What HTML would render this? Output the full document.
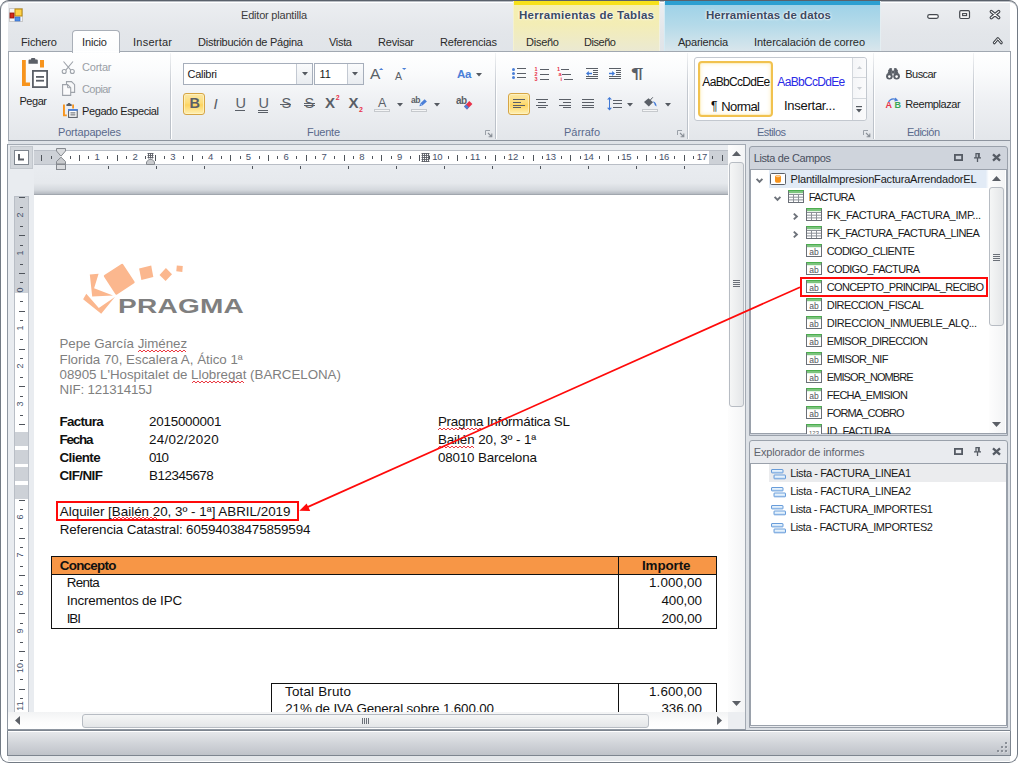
<!DOCTYPE html>
<html lang="es"><head><meta charset="utf-8"><title>Editor plantilla</title>
<style>
html,body{margin:0;padding:0;background:#fff;}
body{width:1018px;height:763px;overflow:hidden;position:relative;font-family:"Liberation Sans", "DejaVu Sans", sans-serif;font-size:11px;}
.a{position:absolute;box-sizing:border-box;}
.t{position:absolute;white-space:pre;}
svg{overflow:visible}
</style></head>
<body>
<div class="a" style="left:0px;top:0px;width:1018px;height:763px;background:#fff;border:1px solid #727a84;border-top:1px solid #5a616b;border-radius:9px;box-shadow:inset 0 1px 0 #b9bdc3;"></div>
<div class="a" style="left:8px;top:3px;width:1002px;height:758px;background:linear-gradient(#eceef1 0px,#e3e6ea 30px,#dfe3e8 60px,#dde1e6 100%);"></div>
<div class="a" style="left:513px;top:1px;width:147px;height:51px;background:linear-gradient(#f7e11a 0px,#f7e11a 3.5px,#f6efae 4px,#f3edb6 24px,#ebe9d2 50px);border-left:1px solid #f4f1d0;border-right:1px solid #f1f0e0;"></div>
<div class="a" style="left:664px;top:1px;width:217px;height:51px;background:linear-gradient(#2b9fd1 0px,#2b9fd1 3.5px,#9fd2e8 4px,#b4dae9 24px,#d9e6ec 50px);border-left:1px solid #d4ebf4;border-right:1px solid #e4eef2;"></div>
<svg class="a" style="left:9px;top:8px;" width="14" height="14" viewBox="0 0 14 14"><rect x="0.5" y="0.5" width="13" height="13" fill="#f4f4f4" stroke="#c9c9c9"/>
    <rect x="6" y="1" width="7" height="7" fill="#fdd24a" stroke="#b8860b"/>
    <rect x="1" y="5" width="4" height="5" fill="#d42a1c" stroke="#8e1209" stroke-width="0.8"/>
    <rect x="6" y="9" width="5" height="4" fill="#4f8fe8" stroke="#2a62c4" stroke-width="0.6"/></svg>
<span class="t" style="left:241px;top:8px;font-size:11px;line-height:14px;color:#3c3c3c;letter-spacing:-0.206px;">Editor plantilla</span>
<svg class="a" style="left:927px;top:14px;" width="13" height="6" viewBox="0 0 13 6"><rect x="0.7" y="0.7" width="10.6" height="3.6" rx="1.8" fill="#fff" stroke="#45494f" stroke-width="1.2"/></svg>
<svg class="a" style="left:959px;top:10px;" width="12" height="10" viewBox="0 0 12 10"><rect x="0.7" y="0.7" width="9.8" height="7.8" rx="1.2" fill="#f4f4f4" stroke="#45494f" stroke-width="1.2"/><rect x="3.6" y="3.6" width="4" height="2" fill="#fff" stroke="#45494f" stroke-width="1.1"/></svg>
<svg class="a" style="left:989px;top:10px;" width="12" height="10" viewBox="0 0 12 10"><path d="M2.3 1.6 L9.7 7.6 M9.7 1.6 L2.3 7.6" stroke="#45494f" stroke-width="3.4" stroke-linecap="round"/><path d="M2.3 1.6 L9.7 7.6 M9.7 1.6 L2.3 7.6" stroke="#fff" stroke-width="1.2" stroke-linecap="round"/></svg>
<svg class="a" style="left:993px;top:37px;" width="10" height="8" viewBox="0 0 10 8"><path d="M1.3 5.8 L4.8 1.6 L8.3 5.8" fill="none" stroke="#45494f" stroke-width="3" stroke-linecap="round" stroke-linejoin="round"/><path d="M1.3 5.8 L4.8 1.6 L8.3 5.8" fill="none" stroke="#fff" stroke-width="1" stroke-linecap="round" stroke-linejoin="round"/></svg>
<div class="a" style="left:7px;top:730px;width:1004px;height:26px;background:linear-gradient(#e7e9ec,#d2d5da 50%,#bfc3c9);border:1px solid #7d858f;box-shadow:inset 0 1px 0 #fff;"></div>
<svg class="a" style="left:997px;top:741px;" width="12" height="12" viewBox="0 0 12 12"><rect x="8" y="1" width="2" height="2" fill="#8a8f97"/><rect x="9" y="2" width="1.5" height="1.5" fill="#eceef0" opacity="0.8"/><rect x="8" y="1" width="2" height="2" fill="#8a8f97"/><rect x="4" y="5" width="2" height="2" fill="#8a8f97"/><rect x="5" y="6" width="1.5" height="1.5" fill="#eceef0" opacity="0.8"/><rect x="4" y="5" width="2" height="2" fill="#8a8f97"/><rect x="8" y="5" width="2" height="2" fill="#8a8f97"/><rect x="9" y="6" width="1.5" height="1.5" fill="#eceef0" opacity="0.8"/><rect x="8" y="5" width="2" height="2" fill="#8a8f97"/><rect x="0" y="9" width="2" height="2" fill="#8a8f97"/><rect x="1" y="10" width="1.5" height="1.5" fill="#eceef0" opacity="0.8"/><rect x="0" y="9" width="2" height="2" fill="#8a8f97"/><rect x="4" y="9" width="2" height="2" fill="#8a8f97"/><rect x="5" y="10" width="1.5" height="1.5" fill="#eceef0" opacity="0.8"/><rect x="4" y="9" width="2" height="2" fill="#8a8f97"/><rect x="8" y="9" width="2" height="2" fill="#8a8f97"/><rect x="9" y="10" width="1.5" height="1.5" fill="#eceef0" opacity="0.8"/><rect x="8" y="9" width="2" height="2" fill="#8a8f97"/></svg>
<div class="a" style="left:8px;top:756px;width:1002px;height:5px;background:#e4e7ea;"></div>
<div class="a" style="left:72px;top:30px;width:48px;height:23px;background:linear-gradient(#ffffff,#fbfcfd);border:1px solid #a9afb8;border-bottom:none;border-radius:4px 4px 0 0;z-index:3;"></div>
<span class="t" style="left:21px;top:35px;font-size:11px;line-height:14px;color:#2a2a2a;letter-spacing:-0.115px;z-index:4;">Fichero</span>
<span class="t" style="left:82px;top:35px;font-size:11px;line-height:14px;color:#2a2a2a;letter-spacing:-0.138px;z-index:4;">Inicio</span>
<span class="t" style="left:133px;top:35px;font-size:11px;line-height:14px;color:#2a2a2a;letter-spacing:0.243px;z-index:4;">Insertar</span>
<span class="t" style="left:198px;top:35px;font-size:11px;line-height:14px;color:#2a2a2a;letter-spacing:-0.242px;z-index:4;">Distribución de Página</span>
<span class="t" style="left:329px;top:35px;font-size:11px;line-height:14px;color:#2a2a2a;letter-spacing:-0.316px;z-index:4;">Vista</span>
<span class="t" style="left:378px;top:35px;font-size:11px;line-height:14px;color:#2a2a2a;letter-spacing:-0.216px;z-index:4;">Revisar</span>
<span class="t" style="left:440px;top:35px;font-size:11px;line-height:14px;color:#2a2a2a;letter-spacing:-0.170px;z-index:4;">Referencias</span>
<span class="t" style="left:526px;top:35px;font-size:11px;line-height:14px;color:#2a2a2a;letter-spacing:-0.250px;z-index:4;">Diseño</span>
<span class="t" style="left:584px;top:35px;font-size:11px;line-height:14px;color:#2a2a2a;letter-spacing:-0.450px;z-index:4;">Diseño</span>
<span class="t" style="left:678px;top:35px;font-size:11px;line-height:14px;color:#2a2a2a;letter-spacing:-0.220px;z-index:4;">Apariencia</span>
<span class="t" style="left:754px;top:35px;font-size:11px;line-height:14px;color:#2a2a2a;letter-spacing:-0.041px;z-index:4;">Intercalación de correo</span>
<span class="t" style="left:519px;top:8px;font-size:11.5px;line-height:14px;color:#3c4a63;letter-spacing:0.290px;font-weight:bold;text-shadow:0 0 3px #fff,0 0 2px #fff;">Herramientas de Tablas</span>
<span class="t" style="left:706px;top:8px;font-size:11.5px;line-height:14px;color:#3c4a63;letter-spacing:0.050px;font-weight:bold;text-shadow:0 0 3px #fff,0 0 2px #fff;">Herramientas de datos</span>
<div class="a" style="left:8px;top:51px;width:1003px;height:90px;background:linear-gradient(#ffffff 0px,#fafbfc 20px,#eef0f3 50px,#e3e6ea 88px);border:1px solid #a1a8b1;border-bottom:1px solid #8d949e;border-radius:0 0 0 0;"></div>
<div class="a" style="left:73px;top:51px;width:46px;height:1px;background:#fff;z-index:3;"></div>
<div class="a" style="left:170px;top:53px;width:1px;height:86px;background:linear-gradient(rgba(190,196,204,0.2),#c3c8cf 40%,#b9bfc7);"></div>
<div class="a" style="left:171px;top:53px;width:1px;height:86px;background:linear-gradient(rgba(255,255,255,0),#fff 40%);"></div>
<div class="a" style="left:495px;top:53px;width:1px;height:86px;background:linear-gradient(rgba(190,196,204,0.2),#c3c8cf 40%,#b9bfc7);"></div>
<div class="a" style="left:496px;top:53px;width:1px;height:86px;background:linear-gradient(rgba(255,255,255,0),#fff 40%);"></div>
<div class="a" style="left:687px;top:53px;width:1px;height:86px;background:linear-gradient(rgba(190,196,204,0.2),#c3c8cf 40%,#b9bfc7);"></div>
<div class="a" style="left:688px;top:53px;width:1px;height:86px;background:linear-gradient(rgba(255,255,255,0),#fff 40%);"></div>
<div class="a" style="left:873px;top:53px;width:1px;height:86px;background:linear-gradient(rgba(190,196,204,0.2),#c3c8cf 40%,#b9bfc7);"></div>
<div class="a" style="left:874px;top:53px;width:1px;height:86px;background:linear-gradient(rgba(255,255,255,0),#fff 40%);"></div>
<div class="a" style="left:973px;top:53px;width:1px;height:86px;background:linear-gradient(rgba(190,196,204,0.2),#c3c8cf 40%,#b9bfc7);"></div>
<div class="a" style="left:974px;top:53px;width:1px;height:86px;background:linear-gradient(rgba(255,255,255,0),#fff 40%);"></div>
<span class="t" style="left:58px;top:125px;font-size:11px;line-height:14px;color:#5a6a8c;letter-spacing:-0.166px;">Portapapeles</span>
<span class="t" style="left:307px;top:125px;font-size:11px;line-height:14px;color:#5a6a8c;letter-spacing:-0.250px;">Fuente</span>
<span class="t" style="left:564px;top:125px;font-size:11px;line-height:14px;color:#5a6a8c;letter-spacing:-0.013px;">Párrafo</span>
<span class="t" style="left:757px;top:125px;font-size:11px;line-height:14px;color:#5a6a8c;letter-spacing:-0.568px;">Estilos</span>
<span class="t" style="left:907px;top:125px;font-size:11px;line-height:14px;color:#5a6a8c;letter-spacing:-0.513px;">Edición</span>
<svg class="a" style="left:485px;top:130px;" width="8" height="8" viewBox="0 0 8 8"><path d="M0.5 5 V0.5 H5" fill="none" stroke="#9aa0a8" stroke-width="1"/><path d="M3 3 L6.5 6.5 M6.8 3.6 V6.8 H3.6" fill="none" stroke="#8a9098" stroke-width="1.1"/></svg>
<svg class="a" style="left:677px;top:130px;" width="8" height="8" viewBox="0 0 8 8"><path d="M0.5 5 V0.5 H5" fill="none" stroke="#9aa0a8" stroke-width="1"/><path d="M3 3 L6.5 6.5 M6.8 3.6 V6.8 H3.6" fill="none" stroke="#8a9098" stroke-width="1.1"/></svg>
<svg class="a" style="left:863px;top:130px;" width="8" height="8" viewBox="0 0 8 8"><path d="M0.5 5 V0.5 H5" fill="none" stroke="#9aa0a8" stroke-width="1"/><path d="M3 3 L6.5 6.5 M6.8 3.6 V6.8 H3.6" fill="none" stroke="#8a9098" stroke-width="1.1"/></svg>
<svg class="a" style="left:22px;top:58px;" width="27" height="31" viewBox="0 0 27 31"><path d="M0 2 H3.8 V24.5 H8 V28 H0 Z" fill="#f7941d"/>
    <rect x="18" y="2" width="4" height="7.5" fill="#f7941d"/>
    <path d="M6.5 5.8 V2.6 Q6.5 1.6 7.5 1.6 H9 V0.9 Q9 0 10 0 H12.3 Q13.3 0 13.3 0.9 V1.6 H14.8 Q15.8 1.6 15.8 2.6 V5.8 Z" fill="#5a5f67"/>
    <rect x="10.9" y="12.9" width="14.2" height="16.2" fill="#fff" stroke="#5a5f67" stroke-width="1.8"/>
    <rect x="14" y="18" width="8" height="1.8" fill="#5a5f67"/><rect x="14" y="21.8" width="8" height="1.8" fill="#5a5f67"/></svg>
<span class="t" style="left:19.5px;top:94px;font-size:11px;line-height:15px;color:#1e1e1e;letter-spacing:-0.465px;">Pegar</span>
<svg class="a" style="left:61px;top:61px;" width="15" height="13" viewBox="0 0 15 13"><path d="M2.5 0.5 L9.8 9.2 M12 0.5 L4.8 9.2" stroke="#9ea3aa" stroke-width="1.1" fill="none"/>
    <circle cx="3.2" cy="10.5" r="2" fill="none" stroke="#9ea3aa" stroke-width="1.1"/><circle cx="11.3" cy="10.5" r="2" fill="none" stroke="#9ea3aa" stroke-width="1.1"/></svg>
<span class="t" style="left:82px;top:59.8px;font-size:11px;line-height:14px;color:#9a9fa6;letter-spacing:-0.212px;">Cortar</span>
<svg class="a" style="left:62px;top:81px;" width="14" height="15" viewBox="0 0 14 15"><path d="M4.5 0.6 H9.5 L12.6 3.7 V11.4 H4.5 Z" fill="#f7f8f9" stroke="#9ea3aa" stroke-width="1.1"/>
    <path d="M0.6 3.6 H5.6 L8.7 6.7 V14.4 H0.6 Z" fill="#fbfbfc" stroke="#9ea3aa" stroke-width="1.1"/><path d="M5.6 3.6 V6.7 H8.7" fill="none" stroke="#9ea3aa" stroke-width="1"/></svg>
<span class="t" style="left:82px;top:82px;font-size:11px;line-height:14px;color:#9a9fa6;letter-spacing:-0.581px;">Copiar</span>
<svg class="a" style="left:63px;top:103px;" width="15" height="15" viewBox="0 0 15 15"><path d="M0 1.5 H1.9 V11.5 H3.8 V13.2 H0 Z" fill="#f7941d"/><rect x="9.2" y="1.5" width="1.8" height="4" fill="#f7941d"/>
    <path d="M3.4 3 V1.6 Q3.4 0.9 4.1 0.9 H4.7 Q4.7 0 5.7 0 H6.4 Q7.4 0 7.4 0.9 H8 Q8.7 0.9 8.7 1.6 V3 Z" fill="#5a5f67"/>
    <rect x="5.6" y="7" width="8.6" height="7.4" fill="#fff" stroke="#5a5f67" stroke-width="1.1"/><rect x="5" y="6" width="9.8" height="1.8" fill="#4a7fd8"/>
    <rect x="7.4" y="9.4" width="5" height="1" fill="#5a5f67"/><rect x="7.4" y="11.4" width="5" height="1" fill="#5a5f67"/></svg>
<span class="t" style="left:82px;top:104px;font-size:11px;line-height:14px;color:#1e1e1e;letter-spacing:-0.397px;">Pegado Especial</span>
<div class="a" style="left:183px;top:63px;width:130px;height:22px;background:#fff;border:1px solid #a6aebb;"></div>
<div class="a" style="left:296px;top:64px;width:16px;height:20px;background:linear-gradient(#fafbfc,#e9ecf0);border-left:1px solid #c3c9d2;"></div>
<span class="t" style="left:187.5px;top:67px;font-size:11px;line-height:14px;color:#1a1a1a;letter-spacing:-0.281px;">Calibri</span>
<div class="a" style="left:314px;top:63px;width:50px;height:22px;background:#fff;border:1px solid #a6aebb;"></div>
<div class="a" style="left:347px;top:64px;width:16px;height:20px;background:linear-gradient(#fafbfc,#e9ecf0);border-left:1px solid #c3c9d2;"></div>
<span class="t" style="left:319.6px;top:67px;font-size:11px;line-height:14px;color:#1a1a1a;letter-spacing:-0.022px;">11</span>
<svg class="a" style="left:301.5px;top:72.4px;" width="6" height="3.5" viewBox="0 0 6 3.5"><path d="M0 0 H6 L3 3.5 Z" fill="#555a61"/></svg>
<svg class="a" style="left:352.3px;top:72.4px;" width="6" height="3.5" viewBox="0 0 6 3.5"><path d="M0 0 H6 L3 3.5 Z" fill="#555a61"/></svg>
<span class="t" style="left:370px;top:66px;font-size:15.5px;line-height:16px;color:#5a5f67;letter-spacing:-0.344px;">A</span>
<svg class="a" style="left:379px;top:67.6px;" width="4.4" height="2" viewBox="0 0 4.4 2"><path d="M0 2 L2.2 0 L4.4 2 Z" fill="#4a7fd8"/></svg>
<span class="t" style="left:395px;top:69.6px;font-size:10.5px;line-height:12px;color:#5a5f67;letter-spacing:-0.016px;">A</span>
<svg class="a" style="left:401.6px;top:67.6px;" width="4.4" height="2" viewBox="0 0 4.4 2"><path d="M0 0 H4.4 L2.2 2 Z" fill="#4a7fd8"/></svg>
<span class="t" style="left:457px;top:67px;font-size:11.5px;line-height:14px;color:#4a7fd8;letter-spacing:-0.403px;font-weight:bold;">Aa</span>
<svg class="a" style="left:475.8px;top:73px;" width="6" height="3.5" viewBox="0 0 6 3.5"><path d="M0 0 H6 L3 3.5 Z" fill="#555a61"/></svg>
<div class="a" style="left:183px;top:93px;width:22px;height:22px;background:linear-gradient(#fbe7a6 0%,#fddc78 45%,#fdd460 55%,#fff0b4 100%);border:1px solid #d6a545;border-radius:3px;box-shadow:inset 0 0 0 1px rgba(255,245,200,0.7);"></div>
<span class="t" style="left:189.6px;top:95px;font-size:14.5px;line-height:17px;color:#5a5f67;letter-spacing:-1.484px;font-weight:bold;">B</span>
<span class="t" style="left:213.6px;top:94.6px;font-size:15px;line-height:17px;color:#5a5f67;font-style:italic;font-family:"Liberation Serif",serif;font-weight:bold;">I</span>
<span class="t" style="left:235.4px;top:94.6px;font-size:14.5px;line-height:17px;color:#5a5f67;letter-spacing:-1.284px;">U</span>
<div class="a" style="left:235px;top:110px;width:10px;height:1px;background:#5a5f67;"></div>
<span class="t" style="left:258.4px;top:94.6px;font-size:14.5px;line-height:17px;color:#5a5f67;letter-spacing:-1.284px;">U</span>
<div class="a" style="left:258px;top:110px;width:10px;height:1px;background:#5a5f67;"></div>
<div class="a" style="left:258px;top:112px;width:10px;height:1px;background:#5a5f67;"></div>
<span class="t" style="left:281.4px;top:94.6px;font-size:14.5px;line-height:17px;color:#5a5f67;letter-spacing:-1.272px;">S</span>
<div class="a" style="left:280px;top:104px;width:11px;height:1px;background:#5a5f67;"></div>
<span class="t" style="left:304.6px;top:94.6px;font-size:14.5px;line-height:17px;color:#5a5f67;letter-spacing:-1.272px;">S</span>
<div class="a" style="left:303.5px;top:103px;width:11px;height:1px;background:#5a5f67;"></div>
<div class="a" style="left:303.5px;top:105px;width:11px;height:1px;background:#5a5f67;"></div>
<span class="t" style="left:325px;top:94px;font-size:15px;line-height:18px;color:#5a5f67;letter-spacing:-0.416px;font-weight:bold;">X</span>
<span class="t" style="left:335.8px;top:94.2px;font-size:7px;line-height:8px;color:#e8324a;font-weight:bold;">2</span>
<span class="t" style="left:348.4px;top:94px;font-size:15px;line-height:18px;color:#5a5f67;letter-spacing:-0.616px;font-weight:bold;">X</span>
<span class="t" style="left:359px;top:105.5px;font-size:7px;line-height:8px;color:#e8324a;font-weight:bold;">2</span>
<span class="t" style="left:378px;top:96px;font-size:12.5px;line-height:14px;color:#5a5f67;letter-spacing:0.456px;">A</span>
<div class="a" style="left:374px;top:108.5px;width:16px;height:3px;background:#f4f5f6;border:1px solid #c6c9cd;"></div>
<svg class="a" style="left:397px;top:103px;" width="6" height="3.5" viewBox="0 0 6 3.5"><path d="M0 0 H6 L3 3.5 Z" fill="#555a61"/></svg>
<span class="t" style="left:411px;top:94.5px;font-size:8.5px;line-height:10px;color:#5a5f67;letter-spacing:-0.422px;font-weight:bold;">ab</span>
<svg class="a" style="left:418.5px;top:99px;" width="8.5" height="7.5" viewBox="0 0 8.5 7.5"><path d="M0.4 7.2 L1.2 4.6 L5.6 0.3 L7.9 2.4 L3.4 6.6 Z" fill="#4a7fd8"/><path d="M1.2 4.6 L3.4 6.6" stroke="#dfe9fa" stroke-width="0.7"/></svg>
<div class="a" style="left:411.3px;top:108.5px;width:16px;height:3px;background:#f4f5f6;border:1px solid #c6c9cd;"></div>
<svg class="a" style="left:433.8px;top:103px;" width="6" height="3.5" viewBox="0 0 6 3.5"><path d="M0 0 H6 L3 3.5 Z" fill="#555a61"/></svg>
<span class="t" style="left:456px;top:94.5px;font-size:10px;line-height:11px;color:#5a5f67;letter-spacing:-0.672px;font-weight:bold;">ab</span>
<svg class="a" style="left:464px;top:100.5px;" width="8.5" height="8.5" viewBox="0 0 8.5 8.5"><path d="M0 5.5 L5.3 0 L8.4 2.9 L3 8.4 Z" fill="#e8324a"/><path d="M0 5.5 L2 3.4 L5 6.3 L3 8.4 Z" fill="#4a7fd8"/></svg>
<svg class="a" style="left:512px;top:67.5px;" width="3" height="3" viewBox="0 0 3 3"><circle cx="1.5" cy="1.5" r="1.5" fill="#4a7fd8"/></svg>
<div class="a" style="left:517px;top:68px;width:9px;height:1px;background:#5a5f67;"></div>
<svg class="a" style="left:512px;top:72.0px;" width="3" height="3" viewBox="0 0 3 3"><circle cx="1.5" cy="1.5" r="1.5" fill="#4a7fd8"/></svg>
<div class="a" style="left:517px;top:73px;width:9px;height:1px;background:#5a5f67;"></div>
<svg class="a" style="left:512px;top:76.0px;" width="3" height="3" viewBox="0 0 3 3"><circle cx="1.5" cy="1.5" r="1.5" fill="#4a7fd8"/></svg>
<div class="a" style="left:517px;top:77px;width:9px;height:1px;background:#5a5f67;"></div>
<span class="t" style="left:534.6px;top:65.6px;font-size:5.5px;line-height:6.5px;color:#e8324a;font-weight:bold;">1</span>
<div class="a" style="left:540px;top:68.5px;width:9px;height:1px;background:#5a5f67;"></div>
<span class="t" style="left:534.6px;top:70.6px;font-size:5.5px;line-height:6.5px;color:#e8324a;font-weight:bold;">2</span>
<div class="a" style="left:540px;top:73.5px;width:9px;height:1px;background:#5a5f67;"></div>
<span class="t" style="left:534.6px;top:75.6px;font-size:5.5px;line-height:6.5px;color:#e8324a;font-weight:bold;">3</span>
<div class="a" style="left:540px;top:78.5px;width:9px;height:1px;background:#5a5f67;"></div>
<span class="t" style="left:557px;top:65.6px;font-size:5.5px;line-height:6.5px;color:#e8324a;font-weight:bold;">1</span>
<div class="a" style="left:560.5px;top:69px;width:8.5px;height:1px;background:#5a5f67;"></div>
<span class="t" style="left:558.4px;top:70.6px;font-size:5.5px;line-height:6.5px;color:#e8324a;font-weight:bold;">a</span>
<div class="a" style="left:562.3px;top:74px;width:8.5px;height:1px;background:#5a5f67;"></div>
<span class="t" style="left:560.6px;top:75.6px;font-size:5.5px;line-height:6.5px;color:#e8324a;font-weight:bold;">i</span>
<div class="a" style="left:563.5px;top:79px;width:9px;height:1px;background:#5a5f67;"></div>
<div class="a" style="left:586px;top:68px;width:12px;height:1px;background:#5a5f67;"></div>
<div class="a" style="left:592.5px;top:70px;width:5.5px;height:1px;background:#5a5f67;"></div>
<div class="a" style="left:592.5px;top:72px;width:5.5px;height:1px;background:#5a5f67;"></div>
<div class="a" style="left:592.5px;top:74px;width:5.5px;height:1px;background:#5a5f67;"></div>
<div class="a" style="left:586px;top:76px;width:12px;height:1px;background:#5a5f67;"></div>
<div class="a" style="left:586px;top:78px;width:12px;height:1px;background:#5a5f67;"></div>
<svg class="a" style="left:586.3px;top:70.6px;" width="6" height="5" viewBox="0 0 6 5"><path d="M0 2.5 L2.8 0 V1.7 H6 V3.3 H2.8 V5 Z" fill="#3f78d6"/></svg>
<div class="a" style="left:609px;top:68px;width:12px;height:1px;background:#5a5f67;"></div>
<div class="a" style="left:615.5px;top:70px;width:5.5px;height:1px;background:#5a5f67;"></div>
<div class="a" style="left:615.5px;top:72px;width:5.5px;height:1px;background:#5a5f67;"></div>
<div class="a" style="left:615.5px;top:74px;width:5.5px;height:1px;background:#5a5f67;"></div>
<div class="a" style="left:609px;top:76px;width:12px;height:1px;background:#5a5f67;"></div>
<div class="a" style="left:609px;top:78px;width:12px;height:1px;background:#5a5f67;"></div>
<svg class="a" style="left:609.3px;top:70.6px;" width="6" height="5" viewBox="0 0 6 5"><path d="M6 2.5 L3.2 0 V1.7 H0 V3.3 H3.2 V5 Z" fill="#3f78d6"/></svg>
<span class="t" style="left:631px;top:64px;font-size:15.5px;line-height:18px;color:#5a5f67;font-weight:bold;transform-origin:0 50%;transform:scaleX(1.45);">¶</span>
<div class="a" style="left:508px;top:93px;width:22px;height:22px;background:linear-gradient(#fbe7a6 0%,#fddc78 45%,#fdd460 55%,#fff0b4 100%);border:1px solid #d6a545;border-radius:3px;box-shadow:inset 0 0 0 1px rgba(255,245,200,0.7);"></div>
<div class="a" style="left:513px;top:99px;width:12px;height:1.2px;background:#5a5f67;"></div>
<div class="a" style="left:513px;top:102px;width:8px;height:1.2px;background:#5a5f67;"></div>
<div class="a" style="left:513px;top:104.5px;width:12px;height:1.2px;background:#5a5f67;"></div>
<div class="a" style="left:513px;top:107px;width:8px;height:1.2px;background:#5a5f67;"></div>
<div class="a" style="left:536px;top:99px;width:12px;height:1.2px;background:#5a5f67;"></div>
<div class="a" style="left:538px;top:102px;width:8px;height:1.2px;background:#5a5f67;"></div>
<div class="a" style="left:536px;top:104.5px;width:12px;height:1.2px;background:#5a5f67;"></div>
<div class="a" style="left:538px;top:107px;width:8px;height:1.2px;background:#5a5f67;"></div>
<div class="a" style="left:559px;top:99px;width:12px;height:1.2px;background:#5a5f67;"></div>
<div class="a" style="left:563px;top:102px;width:8px;height:1.2px;background:#5a5f67;"></div>
<div class="a" style="left:559px;top:104.5px;width:12px;height:1.2px;background:#5a5f67;"></div>
<div class="a" style="left:563px;top:107px;width:8px;height:1.2px;background:#5a5f67;"></div>
<div class="a" style="left:582px;top:99px;width:12px;height:1.2px;background:#5a5f67;"></div>
<div class="a" style="left:582px;top:102px;width:12px;height:1.2px;background:#5a5f67;"></div>
<div class="a" style="left:582px;top:104.5px;width:12px;height:1.2px;background:#5a5f67;"></div>
<div class="a" style="left:582px;top:107px;width:12px;height:1.2px;background:#5a5f67;"></div>
<svg class="a" style="left:607px;top:96.8px;" width="5" height="13.4" viewBox="0 0 5 13.4"><path d="M2.5 0 L5 2.6 H3 V10.8 H5 L2.5 13.4 L0 10.8 H2 V2.6 H0 Z" fill="#3f78d6"/></svg>
<div class="a" style="left:613.3px;top:100px;width:9px;height:1.2px;background:#5a5f67;"></div>
<div class="a" style="left:613.3px;top:103.3px;width:9px;height:1.2px;background:#5a5f67;"></div>
<div class="a" style="left:613.3px;top:106.6px;width:9px;height:1.2px;background:#5a5f67;"></div>
<svg class="a" style="left:627px;top:103px;" width="6" height="3.5" viewBox="0 0 6 3.5"><path d="M0 0 H6 L3 3.5 Z" fill="#555a61"/></svg>
<svg class="a" style="left:642.5px;top:96.5px;" width="15" height="10" viewBox="0 0 15 10"><path d="M1 5 L5.5 1.2 L10 5.2 L5.8 9.6 Z" fill="#5a5f67"/><path d="M6.3 4.2 L9.8 0.3" stroke="#5a5f67" stroke-width="1"/>
    <path d="M9.6 4.6 Q13.2 4.8 13.6 9.4 Q11.4 8.4 11.2 6.2 Z" fill="#3f78d6"/></svg>
<div class="a" style="left:642.3px;top:108.5px;width:16px;height:3px;background:#f4f5f6;border:1px solid #c6c9cd;"></div>
<svg class="a" style="left:665px;top:103px;" width="6" height="3.5" viewBox="0 0 6 3.5"><path d="M0 0 H6 L3 3.5 Z" fill="#555a61"/></svg>
<div class="a" style="left:694px;top:57px;width:173px;height:64px;background:#fff;border:1px solid #c3c8cf;border-radius:3px;"></div>
<div class="a" style="left:852px;top:58px;width:14px;height:62px;background:linear-gradient(90deg,#f4f5f7,#fbfbfc);border-left:1px solid #d3d7dc;border-radius:0 3px 3px 0;"></div>
<div class="a" style="left:852px;top:77px;width:14px;height:1px;background:#d3d7dc;"></div>
<div class="a" style="left:852px;top:98px;width:14px;height:1px;background:#d3d7dc;"></div>
<svg class="a" style="left:856.5px;top:66px;" width="5" height="3" viewBox="0 0 5 3"><path d="M0 3 L2.5 0 L5 3 Z" fill="#c9cdd2"/></svg>
<svg class="a" style="left:856.5px;top:87px;" width="5" height="3" viewBox="0 0 5 3"><path d="M0 0 H5 L2.5 3 Z" fill="#c9cdd2"/></svg>
<svg class="a" style="left:856.3px;top:106px;" width="6" height="7" viewBox="0 0 6 7"><rect x="0" y="0" width="6" height="1.2" fill="#555a61"/><path d="M0 3 H6 L3 6.4 Z" fill="#555a61"/></svg>
<div class="a" style="left:698px;top:61px;width:75px;height:56px;background:#fff;border:2px solid #f1c24f;border-radius:4px;box-shadow:inset 0 0 0 1px #fdf1c9, inset 0 0 4px 1px #fdf3d4;"></div>
<span class="t" style="left:702.3px;top:75px;font-size:12px;line-height:14px;color:#111;letter-spacing:-0.672px;">AaBbCcDdEe</span>
<span class="t" style="left:711px;top:99px;font-size:12px;line-height:15px;color:#111;">¶</span>
<span class="t" style="left:721.3px;top:99px;font-size:13px;line-height:15px;color:#111;letter-spacing:-0.641px;">Normal</span>
<span class="t" style="left:777.3px;top:75px;font-size:12px;line-height:14px;color:#2a2ae6;letter-spacing:-0.672px;">AaBbCcDdEe</span>
<span class="t" style="left:784px;top:98px;font-size:13px;line-height:15px;color:#111;letter-spacing:-0.270px;">Insertar...</span>
<svg class="a" style="left:886px;top:68px;" width="14" height="12" viewBox="0 0 14 12"><path d="M2.4 3 L3.8 0.5 H5.6 V3 M11.6 3 L10.2 0.5 H8.4 V3" fill="#5a5f67" stroke="#5a5f67" stroke-width="0.8"/>
    <rect x="5.6" y="2.6" width="2.8" height="3" fill="#5a5f67"/>
    <circle cx="3.4" cy="8.2" r="3.3" fill="#5a5f67"/><circle cx="10.6" cy="8.2" r="3.3" fill="#5a5f67"/><circle cx="3.4" cy="8.6" r="1.3" fill="#fff"/><circle cx="10.6" cy="8.6" r="1.3" fill="#fff"/>
    <path d="M1.5 5.5 L2.6 2.6 H5.8 V6 M12.5 5.5 L11.4 2.6 H8.2 V6" fill="#5a5f67"/></svg>
<span class="t" style="left:905.3px;top:67px;font-size:11px;line-height:14px;color:#1e1e1e;letter-spacing:-0.550px;">Buscar</span>
<svg class="a" style="left:886px;top:97px;" width="15" height="12" viewBox="0 0 15 12"><path d="M2.5 5 Q5 0.2 10.5 2.6" fill="none" stroke="#4a7fd8" stroke-width="1.3"/><path d="M9.2 0.4 L12.4 3.6 L8.4 4.4 Z" fill="#4a7fd8"/></svg>
<span class="t" style="left:885.6px;top:100.8px;font-size:9px;line-height:9px;color:#e8324a;font-weight:bold;">A</span>
<span class="t" style="left:894.6px;top:100.8px;font-size:9px;line-height:9px;color:#3aa655;font-weight:bold;">B</span>
<span class="t" style="left:905.3px;top:96.8px;font-size:11px;line-height:14px;color:#1e1e1e;letter-spacing:-0.446px;">Reemplazar</span>
<div class="a" style="left:7px;top:144px;width:1px;height:587px;background:#8f97a1;"></div>
<div class="a" style="left:1010px;top:51px;width:1px;height:680px;background:#9aa1ab;"></div>
<div class="a" style="left:8px;top:144px;width:738px;height:586px;background:#e9ecf0;border-top:1px solid #a3aab3;border-right:1px solid #a3aab3;border-bottom:1px solid #8f97a1;"></div>
<div class="a" style="left:10px;top:146px;width:23px;height:23px;background:#d2d6db;border:1px solid #c2c7cd;"></div>
<div class="a" style="left:14px;top:150px;width:15px;height:15px;background:#fff;border:1px solid #7e858e;"></div>
<svg class="a" style="left:18px;top:154px;" width="7" height="7" viewBox="0 0 7 7"><path d="M1 0 V5.5 H6" fill="none" stroke="#5b5f66" stroke-width="2"/></svg>
<div class="a" style="left:34px;top:165px;width:694px;height:30px;background:linear-gradient(#e9ecf0 0px,#e6e9ed 18px,#d4d8dd 25px,#b4b9c0 29px,#8e949c 30px);"></div>
<div class="a" style="left:34px;top:150px;width:694px;height:15px;background:#fff;border-top:1px solid #b9bec6;border-bottom:1px solid #b9bec6;"></div>
<div class="a" style="left:34px;top:151px;width:26px;height:13px;background:#cdd1d7;"></div>
<div class="a" style="left:709px;top:151px;width:19px;height:13px;background:#cdd1d7;"></div>
<div class="a" style="left:41px;top:155px;width:1px;height:6px;background:#4f545b;"></div>
<div class="a" style="left:51px;top:156px;width:1px;height:3px;background:#4f545b;"></div>
<div class="a" style="left:70px;top:156px;width:1px;height:3px;background:#4f545b;"></div>
<div class="a" style="left:79px;top:155px;width:1px;height:6px;background:#4f545b;"></div>
<div class="a" style="left:88px;top:156px;width:1px;height:3px;background:#4f545b;"></div>
<span class="t" style="left:94.6px;top:152.3px;font-size:9.5px;line-height:10px;color:#46526b;letter-spacing:-0.097px;">1</span>
<div class="a" style="left:107px;top:156px;width:1px;height:3px;background:#4f545b;"></div>
<div class="a" style="left:117px;top:155px;width:1px;height:6px;background:#4f545b;"></div>
<div class="a" style="left:126px;top:156px;width:1px;height:3px;background:#4f545b;"></div>
<span class="t" style="left:132.4px;top:152.3px;font-size:9.5px;line-height:10px;color:#46526b;letter-spacing:-0.097px;">2</span>
<div class="a" style="left:145px;top:156px;width:1px;height:3px;background:#4f545b;"></div>
<div class="a" style="left:155px;top:155px;width:1px;height:6px;background:#4f545b;"></div>
<div class="a" style="left:164px;top:156px;width:1px;height:3px;background:#4f545b;"></div>
<span class="t" style="left:170.2px;top:152.3px;font-size:9.5px;line-height:10px;color:#46526b;letter-spacing:-0.097px;">3</span>
<div class="a" style="left:183px;top:156px;width:1px;height:3px;background:#4f545b;"></div>
<div class="a" style="left:192px;top:155px;width:1px;height:6px;background:#4f545b;"></div>
<div class="a" style="left:202px;top:156px;width:1px;height:3px;background:#4f545b;"></div>
<span class="t" style="left:208.0px;top:152.3px;font-size:9.5px;line-height:10px;color:#46526b;letter-spacing:-0.097px;">4</span>
<div class="a" style="left:221px;top:156px;width:1px;height:3px;background:#4f545b;"></div>
<div class="a" style="left:230px;top:155px;width:1px;height:6px;background:#4f545b;"></div>
<div class="a" style="left:240px;top:156px;width:1px;height:3px;background:#4f545b;"></div>
<span class="t" style="left:245.8px;top:152.3px;font-size:9.5px;line-height:10px;color:#46526b;letter-spacing:-0.097px;">5</span>
<div class="a" style="left:259px;top:156px;width:1px;height:3px;background:#4f545b;"></div>
<div class="a" style="left:268px;top:155px;width:1px;height:6px;background:#4f545b;"></div>
<div class="a" style="left:277px;top:156px;width:1px;height:3px;background:#4f545b;"></div>
<span class="t" style="left:283.6px;top:152.3px;font-size:9.5px;line-height:10px;color:#46526b;letter-spacing:-0.097px;">6</span>
<div class="a" style="left:296px;top:156px;width:1px;height:3px;background:#4f545b;"></div>
<div class="a" style="left:306px;top:155px;width:1px;height:6px;background:#4f545b;"></div>
<div class="a" style="left:315px;top:156px;width:1px;height:3px;background:#4f545b;"></div>
<span class="t" style="left:321.4px;top:152.3px;font-size:9.5px;line-height:10px;color:#46526b;letter-spacing:-0.097px;">7</span>
<div class="a" style="left:334px;top:156px;width:1px;height:3px;background:#4f545b;"></div>
<div class="a" style="left:344px;top:155px;width:1px;height:6px;background:#4f545b;"></div>
<div class="a" style="left:353px;top:156px;width:1px;height:3px;background:#4f545b;"></div>
<span class="t" style="left:359.2px;top:152.3px;font-size:9.5px;line-height:10px;color:#46526b;letter-spacing:-0.097px;">8</span>
<div class="a" style="left:372px;top:156px;width:1px;height:3px;background:#4f545b;"></div>
<div class="a" style="left:381px;top:155px;width:1px;height:6px;background:#4f545b;"></div>
<div class="a" style="left:391px;top:156px;width:1px;height:3px;background:#4f545b;"></div>
<span class="t" style="left:397.0px;top:152.3px;font-size:9.5px;line-height:10px;color:#46526b;letter-spacing:-0.097px;">9</span>
<div class="a" style="left:410px;top:156px;width:1px;height:3px;background:#4f545b;"></div>
<div class="a" style="left:419px;top:155px;width:1px;height:6px;background:#4f545b;"></div>
<div class="a" style="left:429px;top:156px;width:1px;height:3px;background:#4f545b;"></div>
<span class="t" style="left:432.2px;top:152.3px;font-size:9.5px;line-height:10px;color:#46526b;letter-spacing:-0.178px;">10</span>
<div class="a" style="left:448px;top:156px;width:1px;height:3px;background:#4f545b;"></div>
<div class="a" style="left:457px;top:155px;width:1px;height:6px;background:#4f545b;"></div>
<div class="a" style="left:466px;top:156px;width:1px;height:3px;background:#4f545b;"></div>
<span class="t" style="left:470.0px;top:152.3px;font-size:9.5px;line-height:10px;color:#46526b;letter-spacing:0.525px;">11</span>
<div class="a" style="left:485px;top:156px;width:1px;height:3px;background:#4f545b;"></div>
<div class="a" style="left:495px;top:155px;width:1px;height:6px;background:#4f545b;"></div>
<div class="a" style="left:504px;top:156px;width:1px;height:3px;background:#4f545b;"></div>
<span class="t" style="left:507.8px;top:152.3px;font-size:9.5px;line-height:10px;color:#46526b;letter-spacing:-0.178px;">12</span>
<div class="a" style="left:523px;top:156px;width:1px;height:3px;background:#4f545b;"></div>
<div class="a" style="left:533px;top:155px;width:1px;height:6px;background:#4f545b;"></div>
<div class="a" style="left:542px;top:156px;width:1px;height:3px;background:#4f545b;"></div>
<span class="t" style="left:545.6px;top:152.3px;font-size:9.5px;line-height:10px;color:#46526b;letter-spacing:-0.178px;">13</span>
<div class="a" style="left:561px;top:156px;width:1px;height:3px;background:#4f545b;"></div>
<div class="a" style="left:570px;top:155px;width:1px;height:6px;background:#4f545b;"></div>
<div class="a" style="left:580px;top:156px;width:1px;height:3px;background:#4f545b;"></div>
<span class="t" style="left:583.4px;top:152.3px;font-size:9.5px;line-height:10px;color:#46526b;letter-spacing:-0.178px;">14</span>
<div class="a" style="left:599px;top:156px;width:1px;height:3px;background:#4f545b;"></div>
<div class="a" style="left:608px;top:155px;width:1px;height:6px;background:#4f545b;"></div>
<div class="a" style="left:618px;top:156px;width:1px;height:3px;background:#4f545b;"></div>
<span class="t" style="left:621.2px;top:152.3px;font-size:9.5px;line-height:10px;color:#46526b;letter-spacing:-0.178px;">15</span>
<div class="a" style="left:637px;top:156px;width:1px;height:3px;background:#4f545b;"></div>
<div class="a" style="left:646px;top:155px;width:1px;height:6px;background:#4f545b;"></div>
<div class="a" style="left:655px;top:156px;width:1px;height:3px;background:#4f545b;"></div>
<span class="t" style="left:659.0px;top:152.3px;font-size:9.5px;line-height:10px;color:#46526b;letter-spacing:-0.178px;">16</span>
<div class="a" style="left:674px;top:156px;width:1px;height:3px;background:#4f545b;"></div>
<div class="a" style="left:684px;top:155px;width:1px;height:6px;background:#4f545b;"></div>
<div class="a" style="left:693px;top:156px;width:1px;height:3px;background:#4f545b;"></div>
<span class="t" style="left:696.8px;top:152.3px;font-size:9.5px;line-height:10px;color:#46526b;letter-spacing:-0.178px;">17</span>
<div class="a" style="left:712px;top:156px;width:1px;height:3px;background:#4f545b;"></div>
<div class="a" style="left:722px;top:155px;width:1px;height:6px;background:#4f545b;"></div>
<div class="a" style="left:108px;top:166px;width:1px;height:3px;background:#4f545b;"></div>
<div class="a" style="left:156px;top:166px;width:1px;height:3px;background:#4f545b;"></div>
<div class="a" style="left:204px;top:166px;width:1px;height:3px;background:#4f545b;"></div>
<div class="a" style="left:252px;top:166px;width:1px;height:3px;background:#4f545b;"></div>
<div class="a" style="left:300px;top:166px;width:1px;height:3px;background:#4f545b;"></div>
<div class="a" style="left:348px;top:166px;width:1px;height:3px;background:#4f545b;"></div>
<div class="a" style="left:396px;top:166px;width:1px;height:3px;background:#4f545b;"></div>
<div class="a" style="left:444px;top:166px;width:1px;height:3px;background:#4f545b;"></div>
<div class="a" style="left:492px;top:166px;width:1px;height:3px;background:#4f545b;"></div>
<div class="a" style="left:540px;top:166px;width:1px;height:3px;background:#4f545b;"></div>
<div class="a" style="left:588px;top:166px;width:1px;height:3px;background:#4f545b;"></div>
<div class="a" style="left:636px;top:166px;width:1px;height:3px;background:#4f545b;"></div>
<div class="a" style="left:684px;top:166px;width:1px;height:3px;background:#4f545b;"></div>
<svg class="a" style="left:56px;top:148px;" width="10" height="22" viewBox="0 0 10 22"><path d="M0.5 0.5 H9.5 V3 L5 8.2 L0.5 3 Z" fill="#d9dbde" stroke="#85898f"/>
    <path d="M5 9.2 L9.5 13.5 V16 H0.5 V13.5 Z" fill="#c9cbce" stroke="#85898f"/>
    <rect x="0.5" y="16.5" width="9" height="5" fill="#d9dbde" stroke="#85898f"/></svg>
<svg class="a" style="left:145.5px;top:153px;" width="9" height="12" viewBox="0 0 9 12"><path d="M1.5 0.5 H7.5 M1.5 2.5 H7.5 M1.5 4.5 H7.5 M2.5 0 V5.5 M4.5 0 V5.5 M6.5 0 V5.5" stroke="#5b5f66" stroke-width="0.9" fill="none"/>
    <path d="M0.5 11.5 V9 L3 6.3 H6 L8.5 9 V11.5 Z" fill="#c9cbce" stroke="#85898f"/></svg>
<svg class="a" style="left:421px;top:153px;" width="9" height="10" viewBox="0 0 9 10"><path d="M0.5 0.5 H8.5 M0.5 2.5 H8.5 M0.5 4.5 H8.5 M0.5 6.5 H8.5 M0.5 8.5 H8.5 M1.5 0 V9 M3.5 0 V9 M5.5 0 V9 M7.5 0 V9" stroke="#5b5f66" stroke-width="0.9" fill="none"/></svg>
<div class="a" style="left:34px;top:195px;width:694px;height:517px;background:#fff;"></div>
<div class="a" style="left:14px;top:196px;width:15px;height:516px;background:#fff;border-left:1px solid #b9bec6;border-right:1px solid #b9bec6;border-top:1px solid #b9bec6;"></div>
<div class="a" style="left:15px;top:197px;width:13px;height:96px;background:#cdd1d7;"></div>
<div class="a" style="left:18.5px;top:197px;width:6px;height:1px;background:#4f545b;"></div>
<div class="a" style="left:20px;top:207px;width:3px;height:1px;background:#4f545b;"></div>
<span class="t" style="left:13.5px;top:209.8px;width:12px;height:10px;font-size:9px;line-height:10px;color:#46526b;text-align:center;transform:rotate(-90deg);">2</span>
<div class="a" style="left:20px;top:226px;width:3px;height:1px;background:#4f545b;"></div>
<div class="a" style="left:18.5px;top:235px;width:6px;height:1px;background:#4f545b;"></div>
<div class="a" style="left:20px;top:245px;width:3px;height:1px;background:#4f545b;"></div>
<span class="t" style="left:13.5px;top:247.6px;width:12px;height:10px;font-size:9px;line-height:10px;color:#46526b;text-align:center;transform:rotate(-90deg);">1</span>
<div class="a" style="left:20px;top:264px;width:3px;height:1px;background:#4f545b;"></div>
<div class="a" style="left:18.5px;top:273px;width:6px;height:1px;background:#4f545b;"></div>
<div class="a" style="left:20px;top:282px;width:3px;height:1px;background:#4f545b;"></div>
<span class="t" style="left:13.5px;top:285.4px;width:12px;height:10px;font-size:9px;line-height:10px;color:#46526b;text-align:center;transform:rotate(-90deg);">0</span>
<div class="a" style="left:20px;top:301px;width:3px;height:1px;background:#4f545b;"></div>
<div class="a" style="left:18.5px;top:311px;width:6px;height:1px;background:#4f545b;"></div>
<div class="a" style="left:20px;top:320px;width:3px;height:1px;background:#4f545b;"></div>
<span class="t" style="left:13.5px;top:323.2px;width:12px;height:10px;font-size:9px;line-height:10px;color:#46526b;text-align:center;transform:rotate(-90deg);">1</span>
<div class="a" style="left:20px;top:339px;width:3px;height:1px;background:#4f545b;"></div>
<div class="a" style="left:18.5px;top:349px;width:6px;height:1px;background:#4f545b;"></div>
<div class="a" style="left:20px;top:358px;width:3px;height:1px;background:#4f545b;"></div>
<span class="t" style="left:13.5px;top:361.0px;width:12px;height:10px;font-size:9px;line-height:10px;color:#46526b;text-align:center;transform:rotate(-90deg);">2</span>
<div class="a" style="left:20px;top:377px;width:3px;height:1px;background:#4f545b;"></div>
<div class="a" style="left:18.5px;top:386px;width:6px;height:1px;background:#4f545b;"></div>
<div class="a" style="left:20px;top:396px;width:3px;height:1px;background:#4f545b;"></div>
<span class="t" style="left:13.5px;top:398.8px;width:12px;height:10px;font-size:9px;line-height:10px;color:#46526b;text-align:center;transform:rotate(-90deg);">3</span>
<div class="a" style="left:20px;top:415px;width:3px;height:1px;background:#4f545b;"></div>
<div class="a" style="left:18.5px;top:424px;width:6px;height:1px;background:#4f545b;"></div>
<div class="a" style="left:18.5px;top:500px;width:6px;height:1px;background:#4f545b;"></div>
<div class="a" style="left:20px;top:509px;width:3px;height:1px;background:#4f545b;"></div>
<span class="t" style="left:13.5px;top:512.2px;width:12px;height:10px;font-size:9px;line-height:10px;color:#46526b;text-align:center;transform:rotate(-90deg);">6</span>
<div class="a" style="left:20px;top:528px;width:3px;height:1px;background:#4f545b;"></div>
<div class="a" style="left:18.5px;top:538px;width:6px;height:1px;background:#4f545b;"></div>
<div class="a" style="left:20px;top:547px;width:3px;height:1px;background:#4f545b;"></div>
<span class="t" style="left:13.5px;top:550.0px;width:12px;height:10px;font-size:9px;line-height:10px;color:#46526b;text-align:center;transform:rotate(-90deg);">7</span>
<div class="a" style="left:20px;top:566px;width:3px;height:1px;background:#4f545b;"></div>
<div class="a" style="left:18.5px;top:575px;width:6px;height:1px;background:#4f545b;"></div>
<div class="a" style="left:20px;top:585px;width:3px;height:1px;background:#4f545b;"></div>
<span class="t" style="left:13.5px;top:587.8px;width:12px;height:10px;font-size:9px;line-height:10px;color:#46526b;text-align:center;transform:rotate(-90deg);">8</span>
<div class="a" style="left:20px;top:604px;width:3px;height:1px;background:#4f545b;"></div>
<div class="a" style="left:18.5px;top:613px;width:6px;height:1px;background:#4f545b;"></div>
<div class="a" style="left:20px;top:623px;width:3px;height:1px;background:#4f545b;"></div>
<span class="t" style="left:13.5px;top:625.6px;width:12px;height:10px;font-size:9px;line-height:10px;color:#46526b;text-align:center;transform:rotate(-90deg);">9</span>
<div class="a" style="left:20px;top:642px;width:3px;height:1px;background:#4f545b;"></div>
<div class="a" style="left:18.5px;top:651px;width:6px;height:1px;background:#4f545b;"></div>
<div class="a" style="left:20px;top:660px;width:3px;height:1px;background:#4f545b;"></div>
<span class="t" style="left:13.5px;top:663.4px;width:12px;height:10px;font-size:9px;line-height:10px;color:#46526b;text-align:center;transform:rotate(-90deg);">10</span>
<div class="a" style="left:20px;top:679px;width:3px;height:1px;background:#4f545b;"></div>
<div class="a" style="left:18.5px;top:689px;width:6px;height:1px;background:#4f545b;"></div>
<div class="a" style="left:20px;top:698px;width:3px;height:1px;background:#4f545b;"></div>
<span class="t" style="left:13.5px;top:701.2px;width:12px;height:10px;font-size:9px;line-height:10px;color:#46526b;text-align:center;transform:rotate(-90deg);">11</span>
<div class="a" style="left:15px;top:432px;width:13px;height:14.4px;background:#cdd1d7;"></div>
<div class="a" style="left:15px;top:450px;width:13px;height:14.4px;background:#cdd1d7;"></div>
<div class="a" style="left:15px;top:467px;width:13px;height:14.4px;background:#cdd1d7;"></div>
<div class="a" style="left:15px;top:485px;width:13px;height:14.4px;background:#cdd1d7;"></div>
<div class="a" style="left:728px;top:145px;width:17px;height:568px;background:linear-gradient(90deg,#fdfdfd,#f3f4f5);"></div>
<svg class="a" style="left:732px;top:151px;" width="9" height="5" viewBox="0 0 9 5"><path d="M0 5 L4.5 0 L9 5 Z" fill="#5b5f66"/></svg>
<svg class="a" style="left:732px;top:701px;" width="9" height="5" viewBox="0 0 9 5"><path d="M0 0 H9 L4.5 5 Z" fill="#5b5f66"/></svg>
<div class="a" style="left:729px;top:162px;width:15px;height:245px;background:linear-gradient(90deg,#f5f6f6,#e4e6e8);border:1px solid #b7bcc3;border-radius:3px;"></div>
<div class="a" style="left:733px;top:280px;width:7px;height:1px;background:#6b7078;"></div>
<div class="a" style="left:733px;top:282px;width:7px;height:1px;background:#6b7078;"></div>
<div class="a" style="left:733px;top:284px;width:7px;height:1px;background:#6b7078;"></div>
<div class="a" style="left:733px;top:286px;width:7px;height:1px;background:#6b7078;"></div>
<div class="a" style="left:8px;top:712px;width:737px;height:17px;background:linear-gradient(#f2f3f4,#fdfdfd 60%,#fff);"></div>
<svg class="a" style="left:15.2px;top:716px;" width="5" height="9" viewBox="0 0 5 9"><path d="M5 0 V9 L0 4.5 Z" fill="#5b5f66"/></svg>
<svg class="a" style="left:717.3px;top:716px;" width="5" height="9" viewBox="0 0 5 9"><path d="M0 0 V9 L5 4.5 Z" fill="#5b5f66"/></svg>
<div class="a" style="left:82px;top:714px;width:567px;height:14px;background:linear-gradient(#f5f6f6,#e4e6e8);border:1px solid #b7bcc3;border-radius:3px;"></div>
<div class="a" style="left:362px;top:718px;width:1px;height:6px;background:#6b7078;"></div>
<div class="a" style="left:364px;top:718px;width:1px;height:6px;background:#6b7078;"></div>
<div class="a" style="left:366px;top:718px;width:1px;height:6px;background:#6b7078;"></div>
<div class="a" style="left:368px;top:718px;width:1px;height:6px;background:#6b7078;"></div>
<div class="a" style="left:728px;top:712px;width:17px;height:17px;background:#eceef1;"></div>
<svg class="a" style="left:80px;top:260px;" width="170" height="60" viewBox="0 0 170 60"><g fill="#fbb78e">
    <path d="M42.15 5.12 L53.37 22.14 L36.35 33.36 L25.13 15.98 Z" stroke="#fbb78e" stroke-width="2.6" stroke-linejoin="round"/>
    <path d="M59.1 8.4 L71.2 5.5 L73.3 17.1 L61.4 19.9 Z"/>
    <path d="M85.9 8.1 L92 14.2 L85.6 21.1 L79.5 15 Z"/>
    <path d="M96.8 5.5 L102.8 5.9 L102.3 11.9 L96.3 11.2 Z"/>
    <path d="M9.8 14.5 L18.6 13.7 L14.1 28.3 L33 35.6 L12.2 36.5 Z"/>
    <path d="M6.3 33.8 L3.1 39.3 L21.2 53.8 L34.9 36.9 L18.8 47.9 Z"/>
    </g></svg>
<span class="t" style="left:118px;top:294px;font-size:20px;line-height:24px;font-weight:bold;color:#7f7f7f;transform-origin:0 50%;transform:scaleX(1.40);letter-spacing:0.2px;">PRAGMA</span>
<span class="t" style="left:59.5px;top:336px;font-size:13.33px;line-height:16px;color:#7f7f7f;letter-spacing:-0.032px;">Pepe García Jiménez</span>
<span class="t" style="left:59.5px;top:351.6px;font-size:13.33px;line-height:16px;color:#7f7f7f;letter-spacing:-0.006px;">Florida 70, Escalera A, Ático 1ª</span>
<span class="t" style="left:59.5px;top:367.2px;font-size:13.33px;line-height:16px;color:#7f7f7f;letter-spacing:-0.028px;">08905 L&#x27;Hospitalet de Llobregat (BARCELONA)</span>
<span class="t" style="left:59.5px;top:382px;font-size:13.33px;line-height:16px;color:#7f7f7f;letter-spacing:-0.165px;">NIF: 12131415J</span>
<svg class="a" style="left:138.4px;top:349.5px;" width="48.599999999999994" height="3" viewBox="0 0 48.599999999999994 3"><path d="M0 2 L2 0 L4 2 L6 0 L8 2 L10 0 L12 2 L14 0 L16 2 L18 0 L20 2 L22 0 L24 2 L26 0 L28 2 L30 0 L32 2 L34 0 L36 2 L38 0 L40 2 L42 0 L44 2 L46 0 L48 2" fill="none" stroke="#e8202a" stroke-width="0.9"/></svg>
<svg class="a" style="left:191.8px;top:381px;" width="54.69999999999999" height="3" viewBox="0 0 54.69999999999999 3"><path d="M0 2 L2 0 L4 2 L6 0 L8 2 L10 0 L12 2 L14 0 L16 2 L18 0 L20 2 L22 0 L24 2 L26 0 L28 2 L30 0 L32 2 L34 0 L36 2 L38 0 L40 2 L42 0 L44 2 L46 0 L48 2 L50 0 L52 2" fill="none" stroke="#e8202a" stroke-width="0.9"/></svg>
<span class="t" style="left:59.5px;top:413.6px;font-size:13.4px;line-height:16px;color:#111;letter-spacing:-0.679px;font-weight:bold;">Factura</span>
<span class="t" style="left:149.1px;top:413.6px;font-size:13.4px;line-height:16px;color:#111;letter-spacing:-0.243px;">2015000001</span>
<span class="t" style="left:59.5px;top:431.6px;font-size:13.4px;line-height:16px;color:#111;letter-spacing:-1.201px;font-weight:bold;">Fecha</span>
<span class="t" style="left:149.1px;top:431.6px;font-size:13.4px;line-height:16px;color:#111;letter-spacing:0.274px;">24/02/2020</span>
<span class="t" style="left:59.5px;top:449.6px;font-size:13.4px;line-height:16px;color:#111;letter-spacing:-0.576px;font-weight:bold;">Cliente</span>
<span class="t" style="left:149.1px;top:449.6px;font-size:13.4px;line-height:16px;color:#111;letter-spacing:-1.272px;">010</span>
<span class="t" style="left:59.5px;top:467.6px;font-size:13.4px;line-height:16px;color:#111;letter-spacing:-0.579px;font-weight:bold;">CIF/NIF</span>
<span class="t" style="left:149.1px;top:467.6px;font-size:13.4px;line-height:16px;color:#111;letter-spacing:-0.477px;">B12345678</span>
<span class="t" style="left:437.9px;top:413.6px;font-size:13.4px;line-height:16px;color:#111;letter-spacing:-0.248px;">Pragma Informática SL</span>
<span class="t" style="left:437.9px;top:431.6px;font-size:13.4px;line-height:16px;color:#111;letter-spacing:-0.090px;">Bailén 20, 3º - 1ª</span>
<span class="t" style="left:437.9px;top:449.6px;font-size:13.4px;line-height:16px;color:#111;letter-spacing:-0.162px;">08010 Barcelona</span>
<svg class="a" style="left:437.9px;top:427.5px;" width="44.10000000000002" height="3" viewBox="0 0 44.10000000000002 3"><path d="M0 2 L2 0 L4 2 L6 0 L8 2 L10 0 L12 2 L14 0 L16 2 L18 0 L20 2 L22 0 L24 2 L26 0 L28 2 L30 0 L32 2 L34 0 L36 2 L38 0 L40 2 L42 0 L44 2" fill="none" stroke="#e8202a" stroke-width="0.9"/></svg>
<svg class="a" style="left:437.9px;top:445.5px;" width="36.10000000000002" height="3" viewBox="0 0 36.10000000000002 3"><path d="M0 2 L2 0 L4 2 L6 0 L8 2 L10 0 L12 2 L14 0 L16 2 L18 0 L20 2 L22 0 L24 2 L26 0 L28 2 L30 0 L32 2 L34 0 L36 2" fill="none" stroke="#e8202a" stroke-width="0.9"/></svg>
<span class="t" style="left:59.8px;top:503.6px;font-size:13.4px;line-height:16px;color:#111;letter-spacing:-0.006px;">Alquiler [Bailén 20, 3º - 1ª] ABRIL/2019</span>
<svg class="a" style="left:113px;top:517.3px;" width="44" height="3" viewBox="0 0 44 3"><path d="M0 2 L2 0 L4 2 L6 0 L8 2 L10 0 L12 2 L14 0 L16 2 L18 0 L20 2 L22 0 L24 2 L26 0 L28 2 L30 0 L32 2 L34 0 L36 2 L38 0 L40 2 L42 0 L44 2" fill="none" stroke="#e8202a" stroke-width="0.9"/></svg>
<span class="t" style="left:59.8px;top:521.8px;font-size:13.4px;line-height:16px;color:#111;letter-spacing:-0.145px;">Referencia Catastral: 60594038475859594</span>
<div class="a" style="left:51px;top:556px;width:666px;height:73px;background:#fff;border:1px solid #111;"></div>
<div class="a" style="left:52px;top:557px;width:664px;height:17px;background:#f79646;"></div>
<div class="a" style="left:52px;top:574px;width:664px;height:1px;background:#111;"></div>
<div class="a" style="left:618px;top:557px;width:1px;height:71px;background:#111;"></div>
<span class="t" style="left:59.8px;top:557.8px;font-size:13.4px;line-height:16px;color:#111;letter-spacing:-0.736px;font-weight:bold;">Concepto</span>
<span class="t" style="left:642px;top:558px;font-size:13.4px;line-height:16px;color:#111;letter-spacing:-0.102px;font-weight:bold;">Importe</span>
<span class="t" style="left:66.7px;top:575px;font-size:13.4px;line-height:16px;color:#111;letter-spacing:-0.684px;">Renta</span>
<span class="t" style="left:66.7px;top:592.6px;font-size:13.4px;line-height:16px;color:#111;letter-spacing:-0.173px;">Incrementos de IPC</span>
<span class="t" style="left:66.7px;top:610.6px;font-size:13.4px;line-height:16px;color:#111;letter-spacing:-1.087px;">IBI</span>
<span class="t" style="left:649px;top:575.2px;font-size:13.4px;line-height:16px;color:#111;letter-spacing:0.125px;">1.000,00</span>
<span class="t" style="left:661.5px;top:592.6px;font-size:13.4px;line-height:16px;color:#111;letter-spacing:-0.094px;">400,00</span>
<span class="t" style="left:661.5px;top:610.6px;font-size:13.4px;line-height:16px;color:#111;letter-spacing:-0.094px;">200,00</span>
<div class="a" style="left:34px;top:195px;width:694px;height:517px;overflow:hidden;">
<div class="a" style="left:237px;top:488px;width:446px;height:60px;border:1px solid #111;"></div>
<div class="a" style="left:584px;top:488px;width:1px;height:60px;background:#111;"></div>
</div>
<span class="t" style="left:285px;top:684.4px;font-size:13.4px;line-height:16px;color:#111;letter-spacing:0.198px;">Total Bruto</span>
<span class="t" style="left:649px;top:684.4px;font-size:13.4px;line-height:16px;color:#111;letter-spacing:0.125px;">1.600,00</span>
<div class="a" style="left:34px;top:699px;width:694px;height:13px;overflow:hidden;">
<span class="t" style="left:251.3px;top:2.1px;font-size:13.4px;line-height:16px;color:#111;letter-spacing:-0.147px;">21% de IVA General sobre 1.600,00</span>
<span class="t" style="left:627.5px;top:2.1px;font-size:13.4px;line-height:16px;color:#111;letter-spacing:-0.094px;">336,00</span>
</div>
<div class="a" style="left:749px;top:146px;width:259px;height:290px;background:#cfd4dc;border:1px solid #9aa1ab;border-radius:3px 3px 0 0;"></div>
<div class="a" style="left:750px;top:169px;width:257px;height:265px;background:#fff;border:1px solid #9aa1ab;"></div>
<span class="t" style="left:753.7px;top:150.7px;font-size:11px;line-height:14px;color:#4a5060;letter-spacing:-0.375px;">Lista de Campos</span>
<svg class="a" style="left:954px;top:154px;" width="9" height="7" viewBox="0 0 9 7"><rect x="0.9" y="0.9" width="7.2" height="5.2" fill="none" stroke="#555b64" stroke-width="1.8"/></svg>
<svg class="a" style="left:974px;top:153px;" width="7" height="9" viewBox="0 0 7 9"><path d="M1.4 0.6 H5.8 M2 0.6 V4.6 M0 4.9 H7 M3.5 5 V9" fill="none" stroke="#555b64" stroke-width="1.3"/><rect x="3.8" y="0.3" width="2" height="4.6" fill="#555b64"/></svg>
<svg class="a" style="left:992px;top:154px;" width="9" height="7" viewBox="0 0 9 7"><path d="M1 0.3 L8 6.7 M8 0.3 L1 6.7" stroke="#555b64" stroke-width="2.3"/></svg>
<div class="a" style="left:749px;top:440px;width:259px;height:288px;background:#e9ebef;border:1px solid #9aa1ab;border-radius:3px 3px 0 0;"></div>
<div class="a" style="left:750px;top:463px;width:257px;height:263px;background:#fff;border:1px solid #9aa1ab;"></div>
<span class="t" style="left:753.7px;top:444.7px;font-size:11px;line-height:14px;color:#5f646d;letter-spacing:-0.144px;">Explorador de informes</span>
<svg class="a" style="left:954px;top:448px;" width="9" height="7" viewBox="0 0 9 7"><rect x="0.9" y="0.9" width="7.2" height="5.2" fill="none" stroke="#555b64" stroke-width="1.8"/></svg>
<svg class="a" style="left:974px;top:447px;" width="7" height="9" viewBox="0 0 7 9"><path d="M1.4 0.6 H5.8 M2 0.6 V4.6 M0 4.9 H7 M3.5 5 V9" fill="none" stroke="#555b64" stroke-width="1.3"/><rect x="3.8" y="0.3" width="2" height="4.6" fill="#555b64"/></svg>
<svg class="a" style="left:992px;top:448px;" width="9" height="7" viewBox="0 0 9 7"><path d="M1 0.3 L8 6.7 M8 0.3 L1 6.7" stroke="#555b64" stroke-width="2.3"/></svg>
<div class="a" style="left:769px;top:170px;width:220px;height:18px;background:linear-gradient(90deg,#e2ebf6 0,#e2ebf6 98.5%,#fff 100%);"></div>
<svg class="a" style="left:756px;top:178px;" width="7" height="5" viewBox="0 0 7 5"><path d="M0.6 0.8 L3.5 3.9 L6.4 0.8" fill="none" stroke="#6d727a" stroke-width="1.9"/></svg>
<svg class="a" style="left:770px;top:173px;" width="16" height="12" viewBox="0 0 16 12"><rect x="0.5" y="0.5" width="15" height="11" rx="1" fill="#fff" stroke="#5a5f67"/>
    <rect x="5" y="2.3" width="6" height="7.4" rx="1.6" fill="#f7941d"/><ellipse cx="8" cy="3.4" rx="2.2" ry="0.8" fill="#fcd2a0"/></svg>
<span class="t" style="left:790.6px;top:171.5px;font-size:11px;line-height:14px;color:#1a1a1a;letter-spacing:-0.184px;">PlantillaImpresionFacturaArrendadorEL</span>
<svg class="a" style="left:774.3px;top:196px;" width="7" height="5" viewBox="0 0 7 5"><path d="M0.6 0.8 L3.5 3.9 L6.4 0.8" fill="none" stroke="#6d727a" stroke-width="1.9"/></svg>
<svg class="a" style="left:788px;top:190px;" width="16" height="13" viewBox="0 0 16 13"><rect x="0.5" y="0.5" width="15" height="12" fill="#fff" stroke="#6a6f77"/>
        <rect x="1" y="0" width="14" height="3.2" fill="#7cc47e"/><rect x="0" y="0" width="16" height="1" fill="#4cae4f"/>
        <path d="M1 4.5 H15 M1 7.2 H15 M1 9.9 H15 M5.5 4.5 V12 M10.5 4.5 V12" stroke="#8d9299" stroke-width="1" fill="none"/></svg>
<span class="t" style="left:808.8px;top:189.5px;font-size:11px;line-height:14px;color:#1a1a1a;letter-spacing:-0.857px;">FACTURA</span>
<svg class="a" style="left:793px;top:212.5px;" width="5" height="7" viewBox="0 0 5 7"><path d="M0.8 0.6 L3.9 3.5 L0.8 6.4" fill="none" stroke="#6d727a" stroke-width="1.9"/></svg>
<svg class="a" style="left:806px;top:208px;" width="16" height="13" viewBox="0 0 16 13"><rect x="0.5" y="0.5" width="15" height="12" fill="#fff" stroke="#6a6f77"/>
        <rect x="1" y="0" width="14" height="3.2" fill="#7cc47e"/><rect x="0" y="0" width="16" height="1" fill="#4cae4f"/>
        <path d="M1 4.5 H15 M1 7.2 H15 M1 9.9 H15 M5.5 4.5 V12 M10.5 4.5 V12" stroke="#8d9299" stroke-width="1" fill="none"/></svg>
<span class="t" style="left:826.8px;top:207.5px;font-size:11px;line-height:14px;color:#1a1a1a;letter-spacing:-0.341px;">FK_FACTURA_FACTURA_IMP...</span>
<svg class="a" style="left:793px;top:230.5px;" width="5" height="7" viewBox="0 0 5 7"><path d="M0.8 0.6 L3.9 3.5 L0.8 6.4" fill="none" stroke="#6d727a" stroke-width="1.9"/></svg>
<svg class="a" style="left:806px;top:226px;" width="16" height="13" viewBox="0 0 16 13"><rect x="0.5" y="0.5" width="15" height="12" fill="#fff" stroke="#6a6f77"/>
        <rect x="1" y="0" width="14" height="3.2" fill="#7cc47e"/><rect x="0" y="0" width="16" height="1" fill="#4cae4f"/>
        <path d="M1 4.5 H15 M1 7.2 H15 M1 9.9 H15 M5.5 4.5 V12 M10.5 4.5 V12" stroke="#8d9299" stroke-width="1" fill="none"/></svg>
<span class="t" style="left:826.8px;top:225.5px;font-size:11px;line-height:14px;color:#1a1a1a;letter-spacing:-0.603px;">FK_FACTURA_FACTURA_LINEA</span>
<svg class="a" style="left:806px;top:244px;" width="16" height="13" viewBox="0 0 16 13"><rect x="0.5" y="0.5" width="15" height="12" fill="#fff" stroke="#6a6f77"/>
        <rect x="1" y="0" width="14" height="3.2" fill="#7cc47e"/><rect x="0" y="0" width="16" height="1" fill="#4cae4f"/>
        <text x="8" y="11.3" font-size="8.5" text-anchor="middle" fill="#50555c" font-family="Liberation Sans, sans-serif">ab</text></svg>
<span class="t" style="left:826.8px;top:243.5px;font-size:11px;line-height:14px;color:#1a1a1a;letter-spacing:-0.707px;">CODIGO_CLIENTE</span>
<svg class="a" style="left:806px;top:262px;" width="16" height="13" viewBox="0 0 16 13"><rect x="0.5" y="0.5" width="15" height="12" fill="#fff" stroke="#6a6f77"/>
        <rect x="1" y="0" width="14" height="3.2" fill="#7cc47e"/><rect x="0" y="0" width="16" height="1" fill="#4cae4f"/>
        <text x="8" y="11.3" font-size="8.5" text-anchor="middle" fill="#50555c" font-family="Liberation Sans, sans-serif">ab</text></svg>
<span class="t" style="left:826.8px;top:261.5px;font-size:11px;line-height:14px;color:#1a1a1a;letter-spacing:-0.683px;">CODIGO_FACTURA</span>
<svg class="a" style="left:806px;top:280px;" width="16" height="13" viewBox="0 0 16 13"><rect x="0.5" y="0.5" width="15" height="12" fill="#fff" stroke="#6a6f77"/>
        <rect x="1" y="0" width="14" height="3.2" fill="#7cc47e"/><rect x="0" y="0" width="16" height="1" fill="#4cae4f"/>
        <text x="8" y="11.3" font-size="8.5" text-anchor="middle" fill="#50555c" font-family="Liberation Sans, sans-serif">ab</text></svg>
<span class="t" style="left:826.8px;top:279.5px;font-size:11px;line-height:14px;color:#1a1a1a;letter-spacing:-0.692px;">CONCEPTO_PRINCIPAL_RECIBO</span>
<svg class="a" style="left:806px;top:298px;" width="16" height="13" viewBox="0 0 16 13"><rect x="0.5" y="0.5" width="15" height="12" fill="#fff" stroke="#6a6f77"/>
        <rect x="1" y="0" width="14" height="3.2" fill="#7cc47e"/><rect x="0" y="0" width="16" height="1" fill="#4cae4f"/>
        <text x="8" y="11.3" font-size="8.5" text-anchor="middle" fill="#50555c" font-family="Liberation Sans, sans-serif">ab</text></svg>
<span class="t" style="left:826.8px;top:297.5px;font-size:11px;line-height:14px;color:#1a1a1a;letter-spacing:-0.611px;">DIRECCION_FISCAL</span>
<svg class="a" style="left:806px;top:316px;" width="16" height="13" viewBox="0 0 16 13"><rect x="0.5" y="0.5" width="15" height="12" fill="#fff" stroke="#6a6f77"/>
        <rect x="1" y="0" width="14" height="3.2" fill="#7cc47e"/><rect x="0" y="0" width="16" height="1" fill="#4cae4f"/>
        <text x="8" y="11.3" font-size="8.5" text-anchor="middle" fill="#50555c" font-family="Liberation Sans, sans-serif">ab</text></svg>
<span class="t" style="left:826.8px;top:315.5px;font-size:11px;line-height:14px;color:#1a1a1a;letter-spacing:-0.466px;">DIRECCION_INMUEBLE_ALQ...</span>
<svg class="a" style="left:806px;top:334px;" width="16" height="13" viewBox="0 0 16 13"><rect x="0.5" y="0.5" width="15" height="12" fill="#fff" stroke="#6a6f77"/>
        <rect x="1" y="0" width="14" height="3.2" fill="#7cc47e"/><rect x="0" y="0" width="16" height="1" fill="#4cae4f"/>
        <text x="8" y="11.3" font-size="8.5" text-anchor="middle" fill="#50555c" font-family="Liberation Sans, sans-serif">ab</text></svg>
<span class="t" style="left:826.8px;top:333.5px;font-size:11px;line-height:14px;color:#1a1a1a;letter-spacing:-0.670px;">EMISOR_DIRECCION</span>
<svg class="a" style="left:806px;top:352px;" width="16" height="13" viewBox="0 0 16 13"><rect x="0.5" y="0.5" width="15" height="12" fill="#fff" stroke="#6a6f77"/>
        <rect x="1" y="0" width="14" height="3.2" fill="#7cc47e"/><rect x="0" y="0" width="16" height="1" fill="#4cae4f"/>
        <text x="8" y="11.3" font-size="8.5" text-anchor="middle" fill="#50555c" font-family="Liberation Sans, sans-serif">ab</text></svg>
<span class="t" style="left:826.8px;top:351.5px;font-size:11px;line-height:14px;color:#1a1a1a;letter-spacing:-0.626px;">EMISOR_NIF</span>
<svg class="a" style="left:806px;top:370px;" width="16" height="13" viewBox="0 0 16 13"><rect x="0.5" y="0.5" width="15" height="12" fill="#fff" stroke="#6a6f77"/>
        <rect x="1" y="0" width="14" height="3.2" fill="#7cc47e"/><rect x="0" y="0" width="16" height="1" fill="#4cae4f"/>
        <text x="8" y="11.3" font-size="8.5" text-anchor="middle" fill="#50555c" font-family="Liberation Sans, sans-serif">ab</text></svg>
<span class="t" style="left:826.8px;top:369.5px;font-size:11px;line-height:14px;color:#1a1a1a;letter-spacing:-0.916px;">EMISOR_NOMBRE</span>
<svg class="a" style="left:806px;top:388px;" width="16" height="13" viewBox="0 0 16 13"><rect x="0.5" y="0.5" width="15" height="12" fill="#fff" stroke="#6a6f77"/>
        <rect x="1" y="0" width="14" height="3.2" fill="#7cc47e"/><rect x="0" y="0" width="16" height="1" fill="#4cae4f"/>
        <text x="8" y="11.3" font-size="8.5" text-anchor="middle" fill="#50555c" font-family="Liberation Sans, sans-serif">ab</text></svg>
<span class="t" style="left:826.8px;top:387.5px;font-size:11px;line-height:14px;color:#1a1a1a;letter-spacing:-0.730px;">FECHA_EMISION</span>
<svg class="a" style="left:806px;top:406px;" width="16" height="13" viewBox="0 0 16 13"><rect x="0.5" y="0.5" width="15" height="12" fill="#fff" stroke="#6a6f77"/>
        <rect x="1" y="0" width="14" height="3.2" fill="#7cc47e"/><rect x="0" y="0" width="16" height="1" fill="#4cae4f"/>
        <text x="8" y="11.3" font-size="8.5" text-anchor="middle" fill="#50555c" font-family="Liberation Sans, sans-serif">ab</text></svg>
<span class="t" style="left:826.8px;top:405.5px;font-size:11px;line-height:14px;color:#1a1a1a;letter-spacing:-0.839px;">FORMA_COBRO</span>
<div class="a" style="left:751px;top:424px;width:238px;height:10px;overflow:hidden;">
<svg class="a" style="left:55px;top:0px" width="16" height="13" viewBox="0 0 16 13"><rect x="0.5" y="0.5" width="15" height="12" fill="#fff" stroke="#6a6f77"/><rect x="1" y="0" width="14" height="3.2" fill="#7cc47e"/><rect x="0" y="0" width="16" height="1" fill="#4cae4f"/><text x="8" y="11" font-size="6" text-anchor="middle" fill="#50555c" font-family="Liberation Sans, sans-serif">123</text></svg>
<span class="t" style="left:75.8px;top:-0.5px;font-size:11px;line-height:14px;color:#1a1a1a;letter-spacing:-0.45px;">ID_FACTURA</span>
</div>
<div class="a" style="left:989px;top:170px;width:16px;height:263px;background:linear-gradient(90deg,#fdfdfd,#f3f4f5);"></div>
<svg class="a" style="left:992px;top:176px;" width="9" height="5" viewBox="0 0 9 5"><path d="M0 5 L4.5 0 L9 5 Z" fill="#5b5f66"/></svg>
<svg class="a" style="left:992px;top:422px;" width="9" height="5" viewBox="0 0 9 5"><path d="M0 0 H9 L4.5 5 Z" fill="#5b5f66"/></svg>
<div class="a" style="left:989px;top:187px;width:15px;height:139px;background:linear-gradient(90deg,#f5f6f6,#e4e6e8);border:1px solid #b7bcc3;border-radius:3px;"></div>
<div class="a" style="left:993px;top:254px;width:7px;height:1px;background:#6b7078;"></div>
<div class="a" style="left:993px;top:256px;width:7px;height:1px;background:#6b7078;"></div>
<div class="a" style="left:993px;top:258px;width:7px;height:1px;background:#6b7078;"></div>
<div class="a" style="left:993px;top:260px;width:7px;height:1px;background:#6b7078;"></div>
<div class="a" style="left:769px;top:464px;width:237px;height:18px;background:#ebecee;"></div>
<svg class="a" style="left:770.5px;top:467.5px;" width="15" height="12" viewBox="0 0 15 12"><rect x="0.5" y="1.5" width="11.5" height="3.4" rx="0.5" fill="#cfe4f8" stroke="#5a93d6" stroke-width="0.9"/>
        <rect x="3" y="7" width="11.5" height="3.8" rx="0.5" fill="#cfe4f8" stroke="#5a93d6" stroke-width="0.9"/>
        <path d="M1.5 2.7 H11 M4 8.3 H13.5" stroke="#f1f7fd" stroke-width="0.9"/></svg>
<span class="t" style="left:790.2px;top:466px;font-size:11px;line-height:14px;color:#1a1a1a;letter-spacing:-0.356px;">Lista - FACTURA_LINEA1</span>
<svg class="a" style="left:770.5px;top:485.5px;" width="15" height="12" viewBox="0 0 15 12"><rect x="0.5" y="1.5" width="11.5" height="3.4" rx="0.5" fill="#cfe4f8" stroke="#5a93d6" stroke-width="0.9"/>
        <rect x="3" y="7" width="11.5" height="3.8" rx="0.5" fill="#cfe4f8" stroke="#5a93d6" stroke-width="0.9"/>
        <path d="M1.5 2.7 H11 M4 8.3 H13.5" stroke="#f1f7fd" stroke-width="0.9"/></svg>
<span class="t" style="left:790.2px;top:484px;font-size:11px;line-height:14px;color:#1a1a1a;letter-spacing:-0.356px;">Lista - FACTURA_LINEA2</span>
<svg class="a" style="left:770.5px;top:503.5px;" width="15" height="12" viewBox="0 0 15 12"><rect x="0.5" y="1.5" width="11.5" height="3.4" rx="0.5" fill="#cfe4f8" stroke="#5a93d6" stroke-width="0.9"/>
        <rect x="3" y="7" width="11.5" height="3.8" rx="0.5" fill="#cfe4f8" stroke="#5a93d6" stroke-width="0.9"/>
        <path d="M1.5 2.7 H11 M4 8.3 H13.5" stroke="#f1f7fd" stroke-width="0.9"/></svg>
<span class="t" style="left:790.2px;top:502px;font-size:11px;line-height:14px;color:#1a1a1a;letter-spacing:-0.464px;">Lista - FACTURA_IMPORTES1</span>
<svg class="a" style="left:770.5px;top:521.5px;" width="15" height="12" viewBox="0 0 15 12"><rect x="0.5" y="1.5" width="11.5" height="3.4" rx="0.5" fill="#cfe4f8" stroke="#5a93d6" stroke-width="0.9"/>
        <rect x="3" y="7" width="11.5" height="3.8" rx="0.5" fill="#cfe4f8" stroke="#5a93d6" stroke-width="0.9"/>
        <path d="M1.5 2.7 H11 M4 8.3 H13.5" stroke="#f1f7fd" stroke-width="0.9"/></svg>
<span class="t" style="left:790.2px;top:520px;font-size:11px;line-height:14px;color:#1a1a1a;letter-spacing:-0.464px;">Lista - FACTURA_IMPORTES2</span>
<div class="a" style="left:56px;top:501px;width:243px;height:20px;border:2px solid #ff0a0a;"></div>
<div class="a" style="left:800px;top:277px;width:188px;height:20px;border:2px solid #ff0a0a;"></div>
<svg class="a" style="left:0;top:0;pointer-events:none" width="1018" height="763" viewBox="0 0 1018 763"><path d="M800 287.2 L303 509.1" stroke="#ff0a0a" stroke-width="1.7" fill="none"/><path d="M299.3 510.8 L306.6 503.5 L310.2 510.9 Z" fill="#ff0a0a"/></svg>
</body></html>
